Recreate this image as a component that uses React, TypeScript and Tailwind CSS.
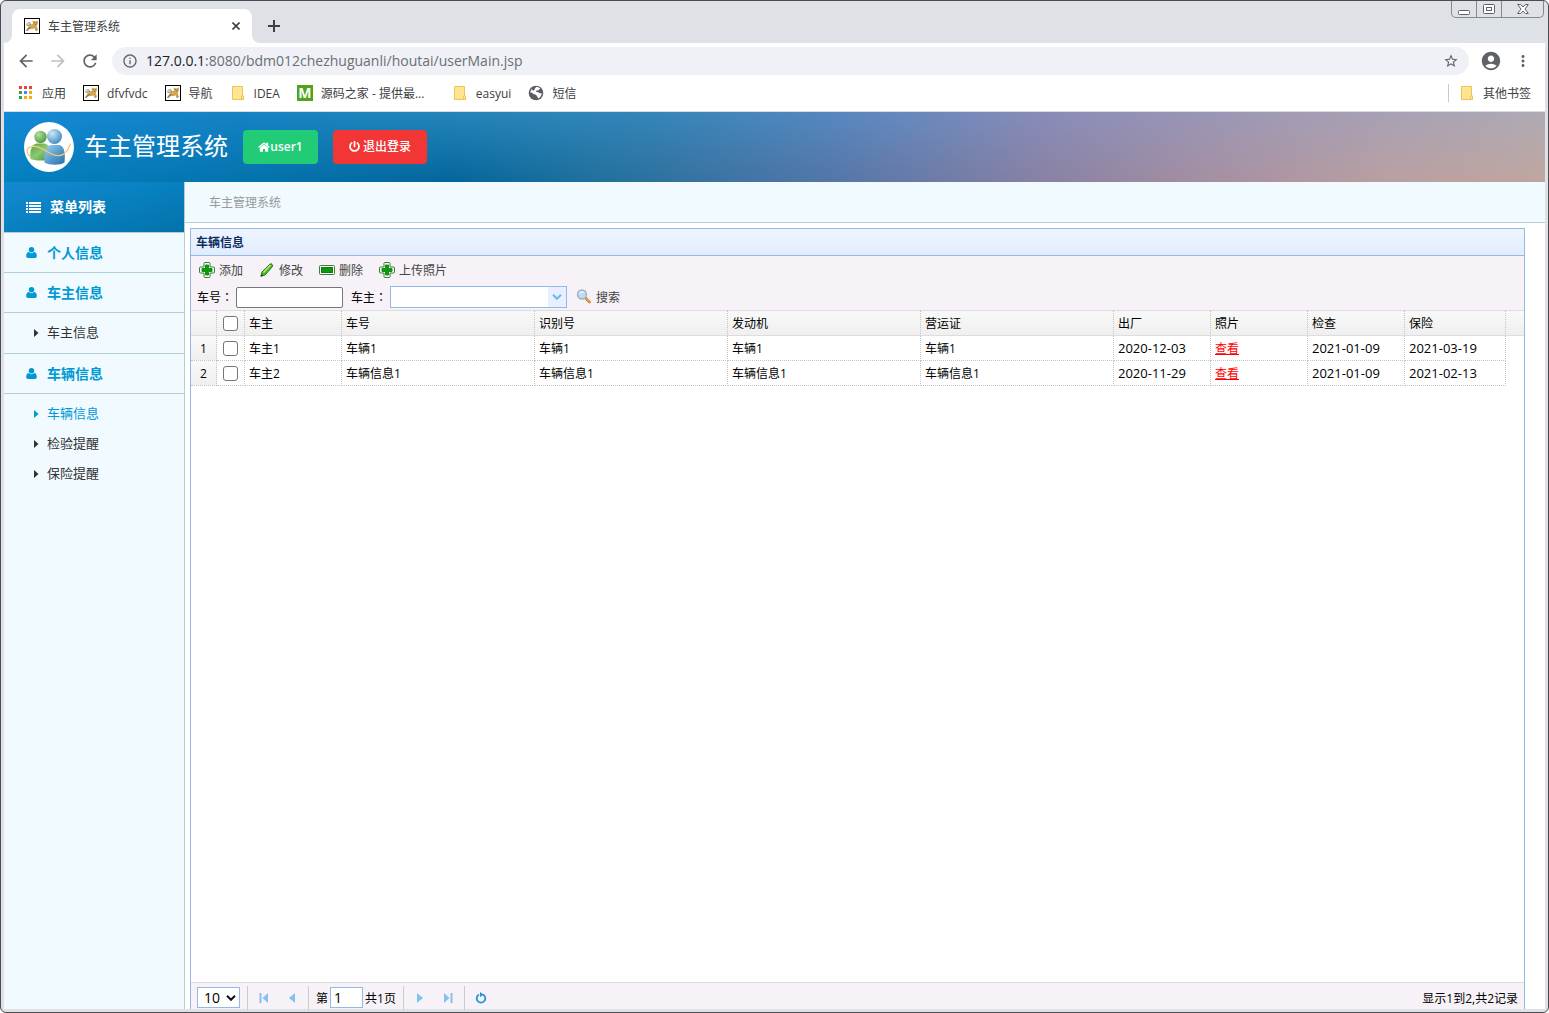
import { useState } from 'react';
import type { ReactNode } from 'react';
import {
  MdAccountCircle,
  MdArrowBack,
  MdArrowForward,
  MdInfoOutline,
  MdMoreVert,
  MdRefresh,
  MdStarBorder,
} from 'react-icons/md';
import { FaPowerOff } from 'react-icons/fa';

interface Vehicle {
  id: number;
  owner: string;
  plate: string;
  vin: string;
  engine: string;
  license: string;
  madeAt: string;
  checkAt: string;
  insureAt: string;
}

const vehicles: Vehicle[] = [
  { id: 1, owner: '车主1', plate: '车辆1', vin: '车辆1', engine: '车辆1', license: '车辆1', madeAt: '2020-12-03', checkAt: '2021-01-09', insureAt: '2021-03-19' },
  { id: 2, owner: '车主2', plate: '车辆信息1', vin: '车辆信息1', engine: '车辆信息1', license: '车辆信息1', madeAt: '2020-11-29', checkAt: '2021-01-09', insureAt: '2021-02-13' },
];

const columns = ['车主', '车号', '识别号', '发动机', '营运证', '出厂', '照片', '检查', '保险'];

const menu = [
  { title: '个人信息', items: [] },
  { title: '车主信息', items: ['车主信息'] },
  { title: '车辆信息', items: ['车辆信息', '检验提醒', '保险提醒'] },
];

/* ---------- icons ---------- */

function CatIcon() {
  return (
    <svg viewBox="0 0 16 16" className="size-4 shrink-0">
      <rect x="0.5" y="0.5" width="15" height="15" fill="#fff" stroke="#000" />
      <path d="M2.200 6.500c.3-2 1.600-2.800 2.800-2.300l1 1.300-1.800 1.300z" fill="#c9c7c2" />
      <path d="M4.500 8.500C6 6.500 8 6 9 5.500L8.500 2.200l1.800 1h2.500l1-1 .2 3.300-1.200 1.800.3 2 1.200 3h-1.500L11 10.200 8.500 11 5 11.200 2.500 13H2z" fill="#d8a651" />
      <path d="M2 12.500 5 9l2.500.5L5 11.300 3.500 13zM10.500 9.500l2 2 .5 1.500h-1.200z" fill="#94805c" />
      <path d="M2.200 6.800 4 7.500l3-1.300M9.800 4.500h1M12.200 4.500h.8M10.800 6.300h1.500M5 4.200l1.500 1.500" stroke="#5a5040" strokeWidth="0.7" fill="none" />
    </svg>
  );
}

function FolderIcon() {
  return (
    <svg viewBox="0 0 16 16" className="size-4 shrink-0">
      <path d="M2.500 1.500h10v9.500h1v3.500h-11z" fill="#ffe491" stroke="#ecc753" />
      <path d="M11.500 14v-3h2v3z" fill="#fff0b8" stroke="#ecc753" />
    </svg>
  );
}

function AppsIcon() {
  const fills = ['#ea4335', '#ea4335', '#ea4335', '#34a05a', '#4285f4', '#fbab05', '#34a05a', '#fbab05', '#fbab05'];
  return (
    <svg viewBox="0 0 16 16" className="size-4 shrink-0">
      {fills.map((fill, i) => (
        <rect key={i} x={1 + (i % 3) * 5} y={1 + Math.floor(i / 3) * 5} width="3" height="3" fill={fill} />
      ))}
    </svg>
  );
}

function GlobeIcon() {
  return (
    <svg viewBox="0 0 16 16" className="size-4 shrink-0">
      <circle cx="8" cy="8" r="7.300" fill="#5a5d63" />
      <path d="M8 2.200c1.500-.3 3.200.3 4.300 1.500-.8.2-1 .9-1.600 1.300-.8.500-1.900.3-2.500.9-.5.600.3 1.100 1.100 1 1.200-.1 1.500.9 2.300 1.300.7.300 1.500.1 2.100-.2 0 2.400-1.300 4.500-3.400 5.500-.6-.4-.3-1.200-.9-1.700-.6-.5-.6-1.400-1.300-1.800C7 9.400 5.700 9.600 5 8.600c-.6-.8-1.600-.9-2.700-1 .1-1.400.7-2.700 1.600-3.700.5.600.3 1.300 1 1.600.9.300 1.300-.4 1.600-1.100.3-.7.700-1.500 1.500-2.200z" fill="#fff" />
      <path d="M2.300 8.600c1 .2 1.800.4 2.500 1.100.7.700 1.600.6 2 1.400.3.700-.1 1.700.5 2.500-2.700-.2-4.700-2.300-5-5z" fill="#5a5d63" />
    </svg>
  );
}

function BuddiesLogo() {
  return (
    <svg viewBox="0 0 50 50" className="size-[50px] shrink-0">
      <defs>
        <radialGradient id="greenHead" cx="35%" cy="30%" r="75%">
          <stop offset="0" stopColor="#b5dc9c" />
          <stop offset="1" stopColor="#4b9a3c" />
        </radialGradient>
        <radialGradient id="blueHead" cx="35%" cy="30%" r="75%">
          <stop offset="0" stopColor="#cde8f7" />
          <stop offset="1" stopColor="#4189c0" />
        </radialGradient>
        <linearGradient id="greenBody" x1="0" y1="0" x2="1" y2="1">
          <stop offset="0" stopColor="#58a243" />
          <stop offset="0.5" stopColor="#8cc874" />
          <stop offset="1" stopColor="#3f8f37" />
        </linearGradient>
        <linearGradient id="blueBody" x1="0" y1="0" x2="1" y2="1">
          <stop offset="0" stopColor="#a3cfeb" />
          <stop offset="0.5" stopColor="#5a9fcf" />
          <stop offset="1" stopColor="#2a6ca8" />
        </linearGradient>
      </defs>
      <circle cx="25" cy="25" r="25" fill="#fff" />
      <path d="M6.500 37c-1-9 1-14 6-15.500h8c5 1 6 6 6 15.500-5 2-14 2-20 0z" fill="url(#greenBody)" />
      <circle cx="16.500" cy="15" r="6.200" fill="url(#greenHead)" />
      <path d="M20.500 40.500c-1-10 1-16 6-17.500h9c5 1 6 9 5 17.500-4 3-15 3-20 0z" fill="url(#blueBody)" />
      <circle cx="30.500" cy="14.500" r="7.500" fill="url(#blueHead)" />
      <path d="M6 34.500c-6-6-2-11 6-10 9 1 15 11 24 9 6-1 8-6 10.500-12" fill="none" stroke="#f3c878" strokeWidth="1.300" />
    </svg>
  );
}

function HomeIcon() {
  return (
    <svg viewBox="0 0 14 12" className="h-[10px] w-[12px] shrink-0 fill-current">
      <path d="M2 6.800 7 2.700l5 4.100v4.500c0 .3-.2.500-.5.500H8.300V8.500H5.700v3.300H2.500c-.3 0-.5-.2-.5-.5z" />
      <path d="M13.800 5.800 12 4.300V1.100c0-.2-.1-.3-.3-.3H9.900c-.2 0-.3.100-.3.300v1.300L7.800.8c-.5-.4-1.100-.4-1.600 0L.2 5.800c-.1.100-.1.300 0 .4l.6.700c.1.100.3.100.4 0L7 2l5.800 4.900c.1.100.3.100.4 0l.6-.7c.1-.1.100-.3 0-.4z" />
    </svg>
  );
}

function UserIcon() {
  return (
    <svg viewBox="0 0 12 13" className="h-[13px] w-[11px] shrink-0 fill-current">
      <path d="M9 3.500a3 3 0 1 1-6 0 3 3 0 0 1 6 0zM3.200 5.900C1.200 6 .2 8 .2 10.400c0 1.300.8 2.100 2.100 2.100h7.400c1.300 0 2.100-.8 2.100-2.100 0-2.400-1-4.400-3-4.500a4 4 0 0 1-5.600 0z" />
    </svg>
  );
}

function ListIcon() {
  return (
    <svg viewBox="0 0 15 11" className="h-[11px] w-[15px] shrink-0 fill-current">
      <path d="M0 0h2v2H0zM3 0h12v2H3zM0 3h2v2H0zM3 3h12v2H3zM0 6h2v2H0zM3 6h12v2H3zM0 9h2v2H0zM3 9h12v2H3z" />
    </svg>
  );
}

function AddIcon() {
  return (
    <svg viewBox="0 0 16 16" className="size-4 shrink-0">
      <path d="M5.500.5h5l.5.500v4h4l.5.500v5l-.5.500h-4v4l-.5.500h-5l-.5-.5v-4H1l-.5-.5v-5L1 5h4V1z" fill="#fff" stroke="#3f7d3f" />
      <path d="M6.500 3v3.500H3v3h3.500V13h3V9.500H13v-3H9.500V3z" fill="#0f960f" stroke="#0f960f" />
    </svg>
  );
}

function EditIcon() {
  return (
    <svg viewBox="0 0 16 16" className="size-4 shrink-0">
      <path d="m2 14 1-4 8-8c1-1 3.500 1 2.500 2.500L6 13z" fill="#4fba28" stroke="#2c7414" />
      <path d="m4.500 10.500 7-7.500" stroke="#b5ee8c" strokeWidth="1.300" />
      <path d="m1.500 14.700.9-3 2 2.200z" fill="#1f4a10" />
    </svg>
  );
}

function RemoveIcon() {
  return (
    <svg viewBox="0 0 16 16" className="size-4 shrink-0">
      <rect x="0.5" y="3.500" width="15" height="9" rx="1" fill="#fff" stroke="#3f7d3f" />
      <rect x="2.500" y="5.500" width="11" height="5" fill="#0f960f" stroke="#0c800c" />
    </svg>
  );
}

function SearchIcon() {
  return (
    <svg viewBox="0 0 16 16" className="size-4 shrink-0">
      <path d="m10 9.500 3.500 3.500" stroke="#c9781f" strokeWidth="2.600" strokeLinecap="round" />
      <path d="m10.500 9.700 3 3" stroke="#f6b04c" strokeWidth="1.200" strokeLinecap="round" />
      <circle cx="6" cy="5.500" r="4.500" fill="#b5dcfb" stroke="#a9aeb8" strokeWidth="1.400" />
      <path d="M3 5.500a3.200 3.200 0 0 1 5.500-2.200C7 3.500 4.500 4.100 3 5.500z" fill="#e9f6ff" />
    </svg>
  );
}

/* ---------- browser frame ---------- */

function WindowControls() {
  return (
    <div className="flex h-[17px] rounded-b-[5px] border border-t-0 border-[#84888f] text-[#5b5f66]">
      <button aria-label="minimize" className="flex w-[25px] items-end justify-center border-r border-[#84888f] pb-px">
        <svg viewBox="0 0 12 10" className="h-[10px] w-3"><rect x="0.5" y="4.500" width="11" height="4" rx="1" fill="#fff" stroke="currentColor" /></svg>
      </button>
      <button aria-label="restore" className="flex w-[25px] items-center justify-center border-r border-[#84888f]">
        <svg viewBox="0 0 12 10" className="h-[10px] w-3"><rect x="0.5" y="0.5" width="11" height="9" rx="1" fill="#fff" stroke="currentColor" /><rect x="3.500" y="3.500" width="5" height="3" fill="#fff" stroke="currentColor" /></svg>
      </button>
      <button aria-label="close" className="flex w-[41px] items-center justify-center">
        <svg viewBox="0 0 12 10" className="h-[10px] w-3"><path d="M.7.5h3L6 3 8.300.5h3L8 5l3.300 4.500h-3L6 7 3.700 9.500h-3L4 5z" fill="#fff" stroke="currentColor" /></svg>
      </button>
    </div>
  );
}

function TabStrip() {
  return (
    <div className="flex h-[42px] items-start pl-2">
      <div className="relative mt-2 flex h-[34px] w-60 items-center rounded-t-lg bg-white pr-3 pl-3">
        <svg viewBox="0 0 8 8" className="absolute bottom-0 -left-2 size-2 fill-white"><path d="M8 0v8H0a8 8 0 0 0 8-8z" /></svg>
        <svg viewBox="0 0 8 8" className="absolute -right-2 bottom-0 size-2 fill-white"><path d="M0 0v8h8a8 8 0 0 1-8-8z" /></svg>
        <CatIcon />
        <span className="ml-2 flex-1 pt-[2px] text-xs text-[#3c4043]">车主管理系统</span>
        <button aria-label="close tab" className="text-[#3c4043]">
          <svg viewBox="0 0 8 8" className="size-2"><path d="m.5.5 7 7m0-7-7 7" stroke="currentColor" strokeWidth="1.600" /></svg>
        </button>
      </div>
      <button aria-label="new tab" className="mt-[19px] ml-4 text-[#3c4043]">
        <svg viewBox="0 0 12 12" className="size-3"><path d="M6 0v12M0 6h12" stroke="currentColor" strokeWidth="2" /></svg>
      </button>
      <div className="mr-px ml-auto">
        <WindowControls />
      </div>
    </div>
  );
}

function AddressBar() {
  return (
    <div className="flex h-9 items-center bg-white pr-[13px] pl-3 text-[#5f6368]">
      <button aria-label="back"><MdArrowBack className="size-5" /></button>
      <button aria-label="forward" className="ml-3 text-[#bdc1c6]"><MdArrowForward className="size-5" /></button>
      <button aria-label="reload" className="ml-3"><MdRefresh className="size-5" /></button>
      <div className="ml-3 flex h-7 flex-1 items-center rounded-full bg-[#eff1f6] pr-[10px] pl-[10px]">
        <MdInfoOutline className="size-4" />
        <a href="#" className="ml-2 flex-1 text-sm text-[#6b6e73]">
          <span className="text-[#202124]">127.0.0.1</span>:8080/bdm012chezhuguanli/houtai/userMain.jsp
        </a>
        <button aria-label="bookmark"><MdStarBorder className="size-4" /></button>
      </div>
      <button aria-label="account" className="ml-[11px]"><MdAccountCircle className="size-[22px]" /></button>
      <button aria-label="menu" className="ml-3"><MdMoreVert className="size-[18px]" /></button>
    </div>
  );
}

function Bookmark({ icon, children }: { icon: ReactNode; children: ReactNode }) {
  return (
    <a href="#" className="flex items-center gap-2 whitespace-nowrap">
      {icon}
      <span className="pt-[2px]">{children}</span>
    </a>
  );
}

function BookmarkBar() {
  return (
    <div className="flex h-[33px] items-center gap-[17px] border-b border-[#dadce0] bg-white pr-[14px] pb-1 pl-[14px] text-xs text-[#3c4043]">
      <Bookmark icon={<AppsIcon />}>应用</Bookmark>
      <Bookmark icon={<CatIcon />}>dfvfvdc</Bookmark>
      <Bookmark icon={<CatIcon />}>导航</Bookmark>
      <Bookmark icon={<FolderIcon />}>IDEA</Bookmark>
      <div className="w-[138px]">
        <Bookmark icon={<span className="flex size-4 items-center justify-center bg-[#4ea51c] text-sm font-bold text-white">M</span>}>
          源码之家 - 提供最...
        </Bookmark>
      </div>
      <Bookmark icon={<FolderIcon />}>easyui</Bookmark>
      <Bookmark icon={<GlobeIcon />}>短信</Bookmark>
      <div className="ml-auto border-l border-[#c8cace] pl-[10px]">
        <Bookmark icon={<FolderIcon />}>其他书签</Bookmark>
      </div>
    </div>
  );
}

/* ---------- application ---------- */

function Header() {
  return (
    <header className="relative flex h-[70px] shrink-0 items-center bg-[linear-gradient(90deg,#0480be_0%,#0474ae_15%,#04669c_29%,#20709c_38%,#5676a8_54%,#8480a4_66%,#a48ea2_77%,#bba0a2_90%,#c1a69f_100%)] pl-5 text-white">
      <div className="absolute inset-0 bg-[linear-gradient(90deg,#1489d6_0%,#1583c4_15%,#2585b9_29%,#3585b8_42%,#5a88c0_55%,#8a8cb8_68%,#a29cb4_84%,#aeaab4_100%)] [mask-image:linear-gradient(black,transparent)]" />
      <div className="relative flex items-center">
        <BuddiesLogo />
        <h1 className="ml-[10px] pb-[2px] text-2xl">车主管理系统</h1>
        <button className="mb-px ml-[15px] flex h-[34px] w-[75px] items-center justify-center rounded bg-[#22cc77] text-xs font-semibold">
          <HomeIcon />
          user1
        </button>
        <button className="mb-px ml-[15px] flex h-[34px] w-[94px] items-center justify-center gap-[3px] rounded bg-[#f23535] text-xs font-medium">
          <FaPowerOff className="size-[11px]" />
          退出登录
        </button>
      </div>
    </header>
  );
}

function Sidebar({ active, onSelect }: { active: string; onSelect: (name: string) => void }) {
  return (
    <aside className="w-[181px] shrink-0 border-r border-[#b1cfd8] bg-[#f0faff]">
      <div className="flex h-[50px] items-center gap-[9px] bg-linear-to-br from-[#1489d3] via-[#0880bf] to-[#0472aa] pl-[22px] text-sm font-bold text-white">
        <ListIcon />
        菜单列表
      </div>
      <nav className="border-t border-[#b1cfd8]">
        {menu.map((group, g) => (
          <div key={g}>
            <h2 className="flex h-10 items-center gap-[10px] border-b border-[#b1cfd8] pl-[22px] text-sm font-bold text-[#0099d4]">
              <UserIcon />
              {group.title}
            </h2>
            {group.items.length > 0 && (
              <ul className={g < menu.length - 1 ? 'border-b border-[#b1cfd8] py-[5px]' : 'py-[5px]'}>
                {group.items.map((item, i) => {
                  const key = `${g}-${i}`;
                  return (
                    <li key={key}>
                      <a
                        href="#"
                        onClick={() => onSelect(key)}
                        className={`flex h-[30px] items-center gap-2 pl-[30px] text-[13px] ${active === key ? 'text-[#0099d4]' : 'text-[#333333]'}`}
                      >
                        <svg viewBox="0 0 5 8" className="h-2 w-[5px] fill-current"><path d="M0 0v8l4.500-4z" /></svg>
                        {item}
                      </a>
                    </li>
                  );
                })}
              </ul>
            )}
          </div>
        ))}
      </nav>
    </aside>
  );
}

function ToolButton({ icon, children }: { icon: ReactNode; children: ReactNode }) {
  return (
    <button type="button" className="flex items-center gap-1 text-[#444444]">
      {icon}
      <span className="pt-[2px]">{children}</span>
    </button>
  );
}

function Toolbar() {
  return (
    <div className="bg-[#f7f2f7]">
      <div className="flex h-7 items-center gap-4 px-2">
        <ToolButton icon={<AddIcon />}>添加</ToolButton>
        <ToolButton icon={<EditIcon />}>修改</ToolButton>
        <ToolButton icon={<RemoveIcon />}>删除</ToolButton>
        <ToolButton icon={<AddIcon />}>上传照片</ToolButton>
      </div>
      <form className="flex h-[26px] items-center px-[6px]">
        <label htmlFor="plate">车号<span className="font-['Noto_Sans_CJK_TC',sans-serif]">：</span></label>
        <input id="plate" type="text" className="ml-[3px] h-[21px] w-[107px] rounded-xs border border-[#767676] bg-white px-1" />
        <label htmlFor="owner" className="ml-2">车主<span className="font-['Noto_Sans_CJK_TC',sans-serif]">：</span></label>
        <div className="relative ml-[3px] h-[22px] w-[177px]">
          <select id="owner" className="block size-full appearance-none border border-[#95b8e7] bg-white px-1">
            <option></option>
            <option>车主1</option>
            <option>车主2</option>
          </select>
          <div className="pointer-events-none absolute top-px right-px bottom-px flex w-[18px] items-center justify-center bg-[#e8f0ff]">
            <svg viewBox="0 0 10 6" className="h-[6px] w-[10px]"><path d="m1 .8 4 4 4-4" fill="none" stroke="#6fb6ea" strokeWidth="2" /></svg>
          </div>
        </div>
        <div className="ml-[9px]">
          <ToolButton icon={<SearchIcon />}>搜索</ToolButton>
        </div>
      </form>
    </div>
  );
}

function Checkbox({ label, checked, onChange }: { label: string; checked: boolean; onChange: () => void }) {
  return (
    <input
      type="checkbox"
      aria-label={label}
      checked={checked}
      onChange={onChange}
      className="mx-auto block size-[15px] appearance-none rounded-[3px] border border-[#767676] bg-white checked:bg-blue-600"
    />
  );
}

function VehicleTable() {
  const [selected, setSelected] = useState<number[]>([]);
  const allSelected = selected.length === vehicles.length;

  const toggle = (id: number) => {
    setSelected(prev => (prev.includes(id) ? prev.filter(x => x !== id) : [...prev, id]));
  };

  const box = 'h-[25px] border-r border-b border-dotted border-[#c4c4c4] px-1';
  const cell = `${box} pt-[2px]`;

  return (
    <table className="w-full table-fixed border-separate border-spacing-0 text-left">
      <colgroup>
        <col className="w-[26px]" />
        <col className="w-7" />
        <col className="w-[97px]" />
        <col />
        <col />
        <col />
        <col />
        <col className="w-[97px]" />
        <col className="w-[97px]" />
        <col className="w-[97px]" />
        <col className="w-[101px]" />
        <col className="w-[18px]" />
      </colgroup>
      <thead>
        <tr className="bg-linear-to-b from-[#f9f9f9] to-[#efefef]">
          <th className="h-[26px] border-y border-r border-[#dddddd] [border-right-color:#c4c4c4] [border-right-style:dotted]" />
          <th className="border-y border-r border-[#dddddd] px-1 [border-right-color:#c4c4c4] [border-right-style:dotted]">
            <Checkbox label="全选" checked={allSelected} onChange={() => setSelected(allSelected ? [] : vehicles.map(v => v.id))} />
          </th>
          {columns.map(name => (
            <th key={name} className="border-y border-r border-[#dddddd] px-1 pt-[2px] font-normal [border-right-color:#c4c4c4] [border-right-style:dotted]">{name}</th>
          ))}
          <th className="border-y border-[#dddddd]" />
        </tr>
      </thead>
      <tbody>
        {vehicles.map(v => (
          <tr key={v.id}>
            <td className={`${cell} bg-linear-to-b from-[#f9f9f9] to-[#efefef] text-center`}>{v.id}</td>
            <td className={box}>
              <Checkbox label={v.owner} checked={selected.includes(v.id)} onChange={() => toggle(v.id)} />
            </td>
            <td className={cell}>{v.owner}</td>
            <td className={cell}>{v.plate}</td>
            <td className={cell}>{v.vin}</td>
            <td className={cell}>{v.engine}</td>
            <td className={cell}>{v.license}</td>
            <td className={`${cell} text-[13px]`}>{v.madeAt}</td>
            <td className={cell}><a href="#" className="text-[#ff0000] underline">查看</a></td>
            <td className={`${cell} text-[13px]`}>{v.checkAt}</td>
            <td className={`${cell} text-[13px]`}>{v.insureAt}</td>
            <td />
          </tr>
        ))}
      </tbody>
    </table>
  );
}

function PagerButton({ label, path }: { label: string; path: string }) {
  return (
    <button type="button" aria-label={label} className="flex w-7 justify-center">
      <svg viewBox="0 0 10 10" className="size-[10px] fill-[#85c2ee]"><path d={path} /></svg>
    </button>
  );
}

function Pagination() {
  const [page, setPage] = useState('1');
  return (
    <div className="flex h-[27px] shrink-0 items-center border-t border-[#dddddd] bg-[#f7f2f7] px-[6px] pt-[3px]">
      <div className="relative">
        <select aria-label="每页记录数" className="block h-[21px] w-[43px] appearance-none border border-[#95b8e7] bg-white pl-[6px] text-sm leading-none">
          <option>10</option>
          <option>20</option>
        </select>
        <svg viewBox="0 0 10 6" className="pointer-events-none absolute top-2 right-1 h-[6px] w-[10px]"><path d="m1 .8 4 4 4-4" fill="none" stroke="#111" strokeWidth="2" /></svg>
      </div>
      <div className="ml-[7px] h-6 border-l border-[#cccccc]" />
      <div className="flex px-[2px]">
        <PagerButton label="首页" path="M.5 0h2v10h-2zM9 0v10L3.500 5z" />
        <PagerButton label="上一页" path="M8 0v10L2 5z" />
      </div>
      <div className="h-6 border-l border-[#cccccc]" />
      <label htmlFor="page" className="ml-[7px] pt-[2px]">第</label>
      <input id="page" value={page} onChange={e => setPage(e.target.value)} className="ml-[2px] h-[21px] w-[33px] border border-[#95b8e7] bg-white px-[3px] text-sm" />
      <span className="ml-[2px] pt-[2px]">共1页</span>
      <div className="ml-[7px] h-6 border-l border-[#cccccc]" />
      <div className="flex px-[2px]">
        <PagerButton label="下一页" path="M2 0v10l6-5z" />
        <PagerButton label="末页" path="M1 0v10l5.500-5zM7.500 0h2v10h-2z" />
      </div>
      <div className="h-6 border-l border-[#cccccc]" />
      <button type="button" aria-label="刷新" className="ml-[10px]">
        <svg viewBox="0 0 12 12" className="size-3"><path d="M4 2.500a4.300 4.300 0 1 0 4 0" fill="none" stroke="#2a93dc" strokeWidth="1.800" /><path d="M5 0v5l4-2.300z" fill="#2a93dc" /></svg>
      </button>
      <span className="ml-auto pt-[2px]">显示1到2,共2记录</span>
    </div>
  );
}

export default function App() {
  const [active, setActive] = useState('2-0');

  return (
    <div className="flex h-screen flex-col rounded-md border border-[#4a4c50] bg-[#dee1e6] px-[3px] pb-[3px] font-['Open_Sans','Noto_Sans_CJK_SC',sans-serif] text-xs text-black">
      <TabStrip />
      <AddressBar />
      <BookmarkBar />
      <Header />
      <div className="flex min-h-0 flex-1 bg-white">
        <Sidebar active={active} onSelect={setActive} />
        <main className="flex min-w-0 flex-1 flex-col">
          <div className="flex h-[41px] shrink-0 items-center border-b border-[#b1cfd8] bg-[#f0faff] pt-[2px] pl-6 text-[#999999]">车主管理系统</div>
          <section className="mt-[5px] mr-5 ml-[5px] flex min-h-0 flex-1 flex-col border-x border-t border-[#95b8e7]">
            <h2 className="flex h-[27px] shrink-0 items-center border-b border-[#95b8e7] bg-linear-to-b from-[#eff5ff] to-[#e0ecff] px-[5px] pt-[2px] font-bold text-[#0e2d5f]">车辆信息</h2>
            <Toolbar />
            <div className="min-h-0 flex-1 overflow-hidden">
              <VehicleTable />
            </div>
            <Pagination />
          </section>
        </main>
      </div>
    </div>
  );
}
